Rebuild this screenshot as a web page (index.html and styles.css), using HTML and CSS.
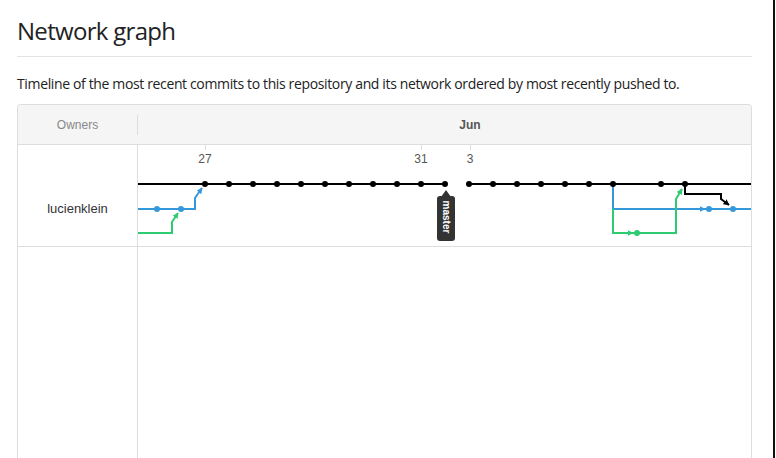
FILE: index.html
```html
<!DOCTYPE html>
<html lang="en">
<head>
<meta charset="utf-8">
<title>Network graph</title>
<link rel="stylesheet" href="styles.css">
</head>
<body>
<div class="frame">
  <main class="content">
    <h1 class="title">Network graph</h1>
    <hr class="rule">
    <p class="lead">Timeline of the most recent commits to this repository and its network ordered by most recently pushed to.</p>
    <div class="network">
      <div class="net-head">
        <div class="owners-head"><span class="owners-label">Owners</span></div>
        <div class="months">
          <span class="month" style="left:332px">Jun</span>
        </div>
      </div>
      <div class="net-body">
        <div class="owners-col">
          <div class="owner-row"><span class="owner">lucienklein</span></div>
        </div>
        <div class="graph-col">
          <div class="graph-row">
            <svg class="graph" width="613" height="101" viewBox="138 145 613 101" xmlns="http://www.w3.org/2000/svg">
              <defs>
                <marker id="arrow-blue" viewBox="0 0 10 10" refX="9" refY="5" markerWidth="6" markerHeight="6" markerUnits="userSpaceOnUse" orient="auto">
                  <path d="M0 0 L10 5 L0 10 Z" fill="#3498db"/>
                </marker>
                <marker id="arrow-green" viewBox="0 0 10 10" refX="9" refY="5" markerWidth="6" markerHeight="6" markerUnits="userSpaceOnUse" orient="auto">
                  <path d="M0 0 L10 5 L0 10 Z" fill="#2ecc71"/>
                </marker>
                <marker id="arrow-black" viewBox="0 0 10 10" refX="9" refY="5" markerWidth="6" markerHeight="6" markerUnits="userSpaceOnUse" orient="auto">
                  <path d="M0 0 L10 5 L0 10 Z" fill="#000"/>
                </marker>
              </defs>
              <g class="ticks">
                <line x1="205.5" y1="145" x2="205.5" y2="150"/>
                <line x1="421.5" y1="145" x2="421.5" y2="150"/>
                <line x1="470.5" y1="145" x2="470.5" y2="150"/>
              </g>
              <g class="dates">
                <text x="205" y="163">27</text>
                <text x="421" y="163">31</text>
                <text x="470" y="163">3</text>
              </g>
              <g class="lane blue">
                <path d="M138 209 H195 V198 L202 188" marker-end="url(#arrow-blue)"/>
                <path d="M613 184 V209 H705" marker-end="url(#arrow-blue)"/>
                <path d="M705 209 H751"/>
              </g>
              <g class="lane green">
                <path d="M138 233 H172 V222 L178 213" marker-end="url(#arrow-green)"/>
                <path d="M613 209 V233 H633" marker-end="url(#arrow-green)"/>
                <path d="M633 233 H676 V199 L682 189" marker-end="url(#arrow-green)"/>
              </g>
              <g class="lane black">
                <path d="M138 184 H446 M469 184 H751"/>
                <path d="M685 184 V194 H721 V199 L729 205" marker-end="url(#arrow-black)"/>
              </g>
              <g class="dots black-dots">
                <circle cx="205" cy="184" r="3"/><circle cx="229" cy="184" r="3"/><circle cx="253" cy="184" r="3"/>
                <circle cx="277" cy="184" r="3"/><circle cx="301" cy="184" r="3"/><circle cx="325" cy="184" r="3"/>
                <circle cx="349" cy="184" r="3"/><circle cx="373" cy="184" r="3"/><circle cx="397" cy="184" r="3"/>
                <circle cx="421" cy="184" r="3"/><circle cx="445" cy="184" r="3"/><circle cx="469" cy="184" r="3"/>
                <circle cx="493" cy="184" r="3"/><circle cx="517" cy="184" r="3"/><circle cx="541" cy="184" r="3"/>
                <circle cx="565" cy="184" r="3"/><circle cx="589" cy="184" r="3"/><circle cx="613" cy="184" r="3"/>
                <circle cx="661" cy="184" r="3"/><circle cx="685" cy="184" r="3"/>
              </g>
              <g class="dots blue-dots">
                <circle cx="157" cy="209" r="3"/><circle cx="181" cy="209" r="3"/>
                <circle cx="709" cy="209" r="3"/><circle cx="733" cy="209" r="3"/>
              </g>
              <g class="dots green-dots">
                <circle cx="637" cy="233" r="3"/>
              </g>
              <g class="branch-label">
                <path class="label-bg" d="M441 197 L446 190 L451 197 Z"/>
                <rect class="label-bg" x="437" y="196" width="18" height="45" rx="3"/>
                <text class="label-text" transform="translate(446 217) rotate(90)">master</text>
              </g>
            </svg>
          </div>
        </div>
      </div>
    </div>
  </main>
</div>
</body>
</html>
```
FILE: styles.css
```css
* { box-sizing: border-box; }

html, body {
  margin: 0;
  padding: 0;
  background: #fff;
}

body {
  overflow: hidden;
}

.frame {
  width: 775px;
  height: 458px;
  border-right: 2px solid #111;
  overflow: hidden;
}

.content {
  padding: 16px 0 0 17px;
  font-family: "Open Sans", "Noto Sans", sans-serif;
  color: #222;
}

.title {
  margin: 0;
  font-size: 24px;
  line-height: 30px;
  font-weight: 400;
  letter-spacing: -0.7px;
  color: #222;
}

.rule {
  margin: 10px 0 0;
  width: 735px;
  height: 0;
  border: 0;
  border-top: 1px solid #e3e3e3;
}

.lead {
  margin: 17px 0 0;
  font-size: 14px;
  line-height: 20px;
  letter-spacing: -0.36px;
  color: #222;
}

.network {
  margin-top: 10px;
  width: 735px;
  border: 1px solid #ddd;
  border-bottom: 0;
  border-radius: 4px 4px 0 0;
  font-family: "Liberation Sans", Arial, sans-serif;
}

.net-head {
  display: flex;
  height: 40px;
  background: #f5f5f5;
  border-bottom: 1px solid #ddd;
  border-radius: 4px 4px 0 0;
}

.owners-head {
  width: 120px;
  padding: 10px 0 9px;
}

.owners-label {
  display: block;
  height: 20px;
  line-height: 20px;
  text-align: center;
  border-right: 1px solid #ddd;
  font-size: 12px;
  color: #888;
}

.months {
  position: relative;
  flex: 1;
}

.month {
  position: absolute;
  top: 10px;
  line-height: 20px;
  transform: translateX(-50%);
  font-size: 12px;
  font-weight: 700;
  color: #555;
}

.net-body {
  display: flex;
  height: 320px;
}

.owners-col {
  width: 120px;
  border-right: 1px solid #ddd;
}

.owner-row {
  height: 102px;
  border-bottom: 1px solid #ddd;
  padding-top: 54px;
  text-align: center;
}

.owner {
  font-size: 13px;
  line-height: 20px;
  color: #333;
}

.graph-col {
  flex: 1;
}

.graph-row {
  height: 102px;
  border-bottom: 1px solid #ddd;
}

.graph {
  display: block;
}

.ticks line {
  stroke: #ddd;
  stroke-width: 1;
}

.dates text {
  font-family: "Liberation Sans", Arial, sans-serif;
  font-size: 12px;
  fill: #555;
  text-anchor: middle;
}

.lane path {
  fill: none;
  stroke-width: 2;
}

.lane.blue path { stroke: #3498db; }
.lane.green path { stroke: #2ecc71; }
.lane.black path { stroke: #000; }

.black-dots circle { fill: #000; }
.blue-dots circle { fill: #3498db; }
.green-dots circle { fill: #2ecc71; }

.label-bg { fill: #333; }

.label-text {
  font-family: "Liberation Sans", Arial, sans-serif;
  font-size: 10px;
  font-weight: 700;
  fill: #fff;
  text-anchor: middle;
  dominant-baseline: central;
}
```
